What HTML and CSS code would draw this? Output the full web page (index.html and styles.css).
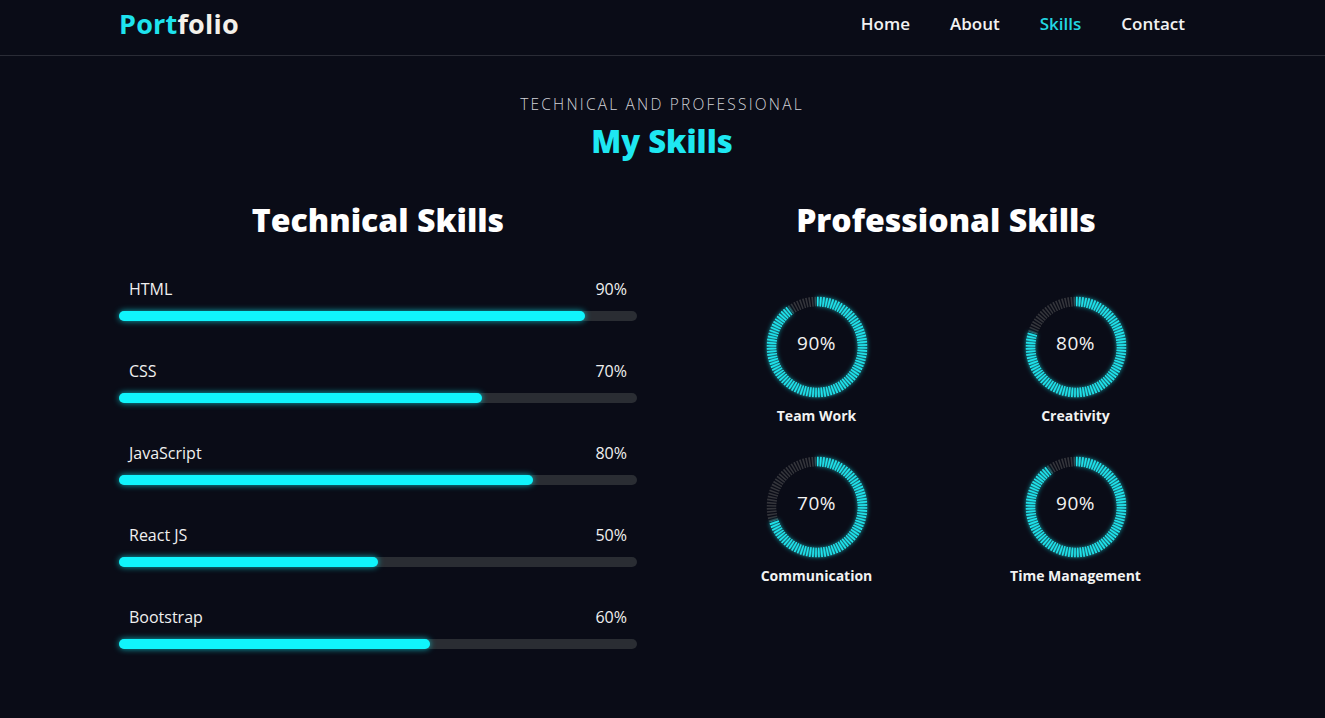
FILE: index.html
```html
<!DOCTYPE html>
<html lang="en">
<head>
<meta charset="utf-8">
<title>Portfolio - Skills</title>
<link rel="stylesheet" href="styles.css">
</head>
<body>
<header class="site-header">
  <div class="header-inner">
    <a class="logo" href="#"><span class="logo-accent">Port</span>folio</a>
    <nav class="nav">
      <a href="#" class="nav-link">Home</a>
      <a href="#" class="nav-link">About</a>
      <a href="#" class="nav-link active">Skills</a>
      <a href="#" class="nav-link">Contact</a>
    </nav>
  </div>
</header>

<main class="skills">
  <p class="eyebrow">TECHNICAL AND PROFESSIONAL</p>
  <h1 class="section-title">My Skills</h1>

  <div class="columns">
    <section class="column">
      <h2 class="col-title">Technical Skills</h2>
      <div class="bars">
        <div class="bar-item">
          <div class="bar-info"><span>HTML</span><span>90%</span></div>
          <div class="track"><div class="fill" style="width:90%"></div></div>
        </div>
        <div class="bar-item">
          <div class="bar-info"><span>CSS</span><span>70%</span></div>
          <div class="track"><div class="fill" style="width:70%"></div></div>
        </div>
        <div class="bar-item">
          <div class="bar-info"><span>JavaScript</span><span>80%</span></div>
          <div class="track"><div class="fill" style="width:80%"></div></div>
        </div>
        <div class="bar-item">
          <div class="bar-info"><span>React JS</span><span>50%</span></div>
          <div class="track"><div class="fill" style="width:50%"></div></div>
        </div>
        <div class="bar-item">
          <div class="bar-info"><span>Bootstrap</span><span>60%</span></div>
          <div class="track"><div class="fill" style="width:60%"></div></div>
        </div>
      </div>
    </section>

    <section class="column">
      <h2 class="col-title">Professional Skills</h2>
      <svg class="defs-svg" width="0" height="0" aria-hidden="true">
        <defs>
          <mask id="ticks" maskUnits="userSpaceOnUse" x="0" y="0" width="104" height="104">
            <circle cx="52" cy="52" r="45.5" fill="none" stroke="#fff" stroke-width="10" stroke-dasharray="1.55 1.309" transform="rotate(-90 52 52)"/>
          </mask>
          <filter id="glow" x="-30%" y="-30%" width="160%" height="160%">
            <feGaussianBlur in="SourceGraphic" stdDeviation="2.2" result="blur"/>
            <feMerge>
              <feMergeNode in="blur"/>
              <feMergeNode in="SourceGraphic"/>
            </feMerge>
          </filter>
        </defs>
      </svg>
      <div class="rings">
        <div class="ring-item">
          <div class="ring">
            <svg viewBox="0 0 104 104" class="ring-svg">
              <g mask="url(#ticks)">
                <circle cx="52" cy="52" r="45.5" fill="none" stroke="#34353b" stroke-width="10"/>
              </g>
              <g filter="url(#glow)">
                <g mask="url(#ticks)">
                  <circle cx="52" cy="52" r="45.5" fill="none" stroke="#1ee3ec" stroke-width="10" stroke-dasharray="257.3 400" transform="rotate(-90 52 52)"/>
                </g>
              </g>
            </svg>
            <span class="ring-value">90%</span>
          </div>
          <p class="ring-label">Team Work</p>
        </div>
        <div class="ring-item">
          <div class="ring">
            <svg viewBox="0 0 104 104" class="ring-svg">
              <g mask="url(#ticks)">
                <circle cx="52" cy="52" r="45.5" fill="none" stroke="#34353b" stroke-width="10"/>
              </g>
              <g filter="url(#glow)">
                <g mask="url(#ticks)">
                  <circle cx="52" cy="52" r="45.5" fill="none" stroke="#1ee3ec" stroke-width="10" stroke-dasharray="228.7 400" transform="rotate(-90 52 52)"/>
                </g>
              </g>
            </svg>
            <span class="ring-value">80%</span>
          </div>
          <p class="ring-label">Creativity</p>
        </div>
        <div class="ring-item">
          <div class="ring">
            <svg viewBox="0 0 104 104" class="ring-svg">
              <g mask="url(#ticks)">
                <circle cx="52" cy="52" r="45.5" fill="none" stroke="#34353b" stroke-width="10"/>
              </g>
              <g filter="url(#glow)">
                <g mask="url(#ticks)">
                  <circle cx="52" cy="52" r="45.5" fill="none" stroke="#1ee3ec" stroke-width="10" stroke-dasharray="200.1 400" transform="rotate(-90 52 52)"/>
                </g>
              </g>
            </svg>
            <span class="ring-value">70%</span>
          </div>
          <p class="ring-label">Communication</p>
        </div>
        <div class="ring-item">
          <div class="ring">
            <svg viewBox="0 0 104 104" class="ring-svg">
              <g mask="url(#ticks)">
                <circle cx="52" cy="52" r="45.5" fill="none" stroke="#34353b" stroke-width="10"/>
              </g>
              <g filter="url(#glow)">
                <g mask="url(#ticks)">
                  <circle cx="52" cy="52" r="45.5" fill="none" stroke="#1ee3ec" stroke-width="10" stroke-dasharray="257.3 400" transform="rotate(-90 52 52)"/>
                </g>
              </g>
            </svg>
            <span class="ring-value">90%</span>
          </div>
          <p class="ring-label">Time Management</p>
        </div>
      </div>
    </section>
  </div>
</main>
</body>
</html>
```

FILE: styles.css
```css
* { box-sizing: border-box; }

html, body {
  margin: 0;
  padding: 0;
  background: #0a0c17;
  color: #ffffff;
  font-family: "Open Sans", "Liberation Sans", sans-serif;
}

a { text-decoration: none; color: inherit; }

.site-header {
  height: 56px;
  border-bottom: 1px solid #2a2c36;
}

.header-inner {
  height: 46px;
  margin: 0 120px 0 119px;
  display: flex;
  align-items: center;
  justify-content: space-between;
}

.logo {
  font-size: 27px;
  font-weight: 700;
  color: #f4f1ea;
  letter-spacing: 0.2px;
}

.logo-accent { color: #1ee3ee; }

.nav { display: flex; }

.nav-link {
  padding: 0 20px;
  font-size: 17px;
  font-weight: 600;
  color: #f2f2f2;
}

.nav-link.active { color: #22d6e2; }

.skills {
  margin: 0 120px 0 119px;
  text-align: center;
}

.eyebrow {
  margin: 37px 0 0;
  font-size: 15.5px;
  line-height: 22px;
  font-weight: 300;
  letter-spacing: 2.2px;
  color: #d2d2d8;
}

.section-title {
  margin: 6px 0 0;
  font-size: 31px;
  line-height: 40px;
  font-weight: 800;
  color: #1ee8f2;
}

.columns {
  display: grid;
  grid-template-columns: 1fr 1fr;
  column-gap: 50px;
  margin-top: 37px;
}

.col-title {
  margin: 0;
  font-size: 32px;
  line-height: 44px;
  font-weight: 800;
  color: #ffffff;
}

.bars {
  margin-top: 35px;
  text-align: left;
}

.bar-item { margin-bottom: 38px; }

.bar-info {
  display: flex;
  justify-content: space-between;
  padding: 0 10px;
  font-size: 16px;
  line-height: 24px;
  color: #f0f0f0;
}

.track {
  margin-top: 10px;
  height: 10px;
  border-radius: 5px;
  background: #2a2d33;
}

.fill {
  height: 100%;
  border-radius: 5px;
  background: #10f4fc;
  box-shadow: 0 0 6px rgba(16, 244, 252, 0.7);
}

.defs-svg {
  position: absolute;
  width: 0;
  height: 0;
}

.rings {
  margin-top: 53px;
  display: grid;
  grid-template-columns: 1fr 1fr;
  row-gap: 30px;
}

.ring-item {
  display: flex;
  flex-direction: column;
  align-items: center;
}

.ring {
  position: relative;
  width: 104px;
  height: 104px;
  display: flex;
  align-items: center;
  justify-content: center;
}

.ring-svg {
  position: absolute;
  inset: 0;
  width: 104px;
  height: 104px;
  overflow: visible;
}

.ring-value {
  position: relative;
  top: -4px;
  font-size: 19px;
  color: #f2f2f2;
  letter-spacing: 0.5px;
}

.ring-label {
  margin: 8px 0 0;
  font-size: 14px;
  line-height: 18px;
  font-weight: 700;
  color: #f2f2f2;
}
```
